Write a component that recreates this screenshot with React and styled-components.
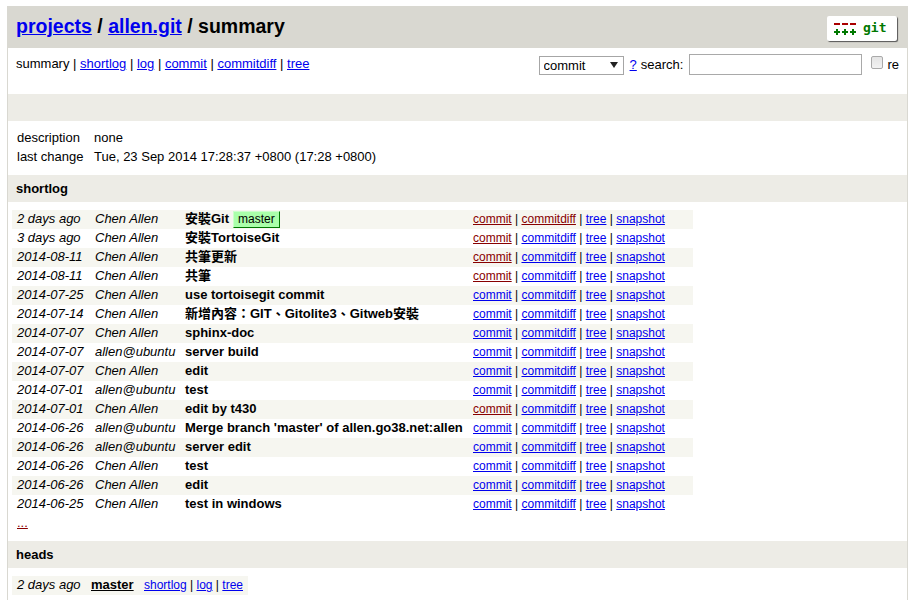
import React from "react";
import styled, { createGlobalStyle } from "styled-components";

const GlobalStyle = createGlobalStyle`
  html, body {
    margin: 0;
    padding: 0;
    height: 600px;
    overflow: hidden;
    background: #fff;
  }
  body {
    font-family: "Liberation Sans", "Noto Sans CJK TC", sans-serif;
    font-size: 13px;
    color: #000;
  }
`;

const Page = styled.div`
  margin: 6px 7px 0 7px;
  min-height: 594px;
  border: solid #d9d8d1;
  border-width: 0 1px;
`;

const Link = styled.a`
  color: ${(p) => (p.$visited ? "#880000" : "#0000ee")};
  text-decoration: underline;
`;

const PageHeader = styled.div`
  height: 42px;
  background: #d9d8d1;
  display: flex;
  align-items: center;
  justify-content: space-between;
  padding: 0 10px 0 8px;
  font-size: 19.5px;
  font-weight: bold;
`;

const Crumbs = styled.div`
  white-space: pre;
  margin-top: -2px;
`;

const Logo = styled.div`
  width: 70px;
  height: 25px;
  margin-top: 3px;
  background: #fff;
  border-radius: 2px;
  box-shadow: 1px 1px 1px #555;
  display: flex;
  align-items: center;
  gap: 6px;
  padding-left: 6px;
  box-sizing: border-box;
`;

const LogoText = styled.span`
  font-family: "DejaVu Sans Mono", monospace;
  font-size: 13px;
  font-weight: bold;
  color: #007800;
  line-height: 1;
  margin-top: -3px;
`;

const NavRow = styled.div`
  height: 46px;
  display: flex;
  justify-content: space-between;
  padding: 0 8px;
`;

const NavLinks = styled.div`
  padding-top: 8px;
  line-height: 16px;
`;

const SearchForm = styled.form`
  display: flex;
  align-items: flex-start;
  padding-top: 6px;
  line-height: 21px;
`;

const SelectWrap = styled.div`
  position: relative;
  width: 85px;
  height: 19px;
  margin: 1px 6px 0 0;
`;

const SearchType = styled.select`
  appearance: none;
  width: 100%;
  height: 100%;
  margin: 0;
  padding: 0 0 0 4px;
  border: 1px solid #a6a6a6;
  border-radius: 0;
  background: #fff;
  color: #000;
  font: 13px "Liberation Sans", sans-serif;
`;

const SelectArrow = styled.span`
  position: absolute;
  right: 6px;
  top: 7px;
  width: 0;
  height: 0;
  border-left: 4px solid transparent;
  border-right: 4px solid transparent;
  border-top: 6px solid #222;
  pointer-events: none;
`;

const SearchLabel = styled.span`
  margin-left: 4px;
  margin-right: 6px;
`;

const SearchInput = styled.input`
  width: 173px;
  height: 21px;
  padding: 0;
  margin: 0 9px 0 0;
  border: 1px solid #a9a9a9;
  box-sizing: border-box;
`;

const ReCheck = styled.input`
  appearance: none;
  width: 12px;
  height: 13px;
  margin: 2px 4px 0 0;
  border: 1px solid #a9a9a9;
  border-radius: 2px;
  background: linear-gradient(#e4e4e4, #f2f2f2);
`;

const EmptyBar = styled.div`
  height: 27px;
  background: #edece6;
`;

const Info = styled.table`
  border-collapse: collapse;
  margin: 8px 0 8px 5px;
  td {
    padding: 0 4px 0 4px;
    height: 19px;
    line-height: 18px;
    vertical-align: top;
  }
  td:first-child {
    width: 69px;
  }
`;

const SectionTitle = styled.div`
  height: 27px;
  line-height: 27px;
  background: #edece6;
  padding-left: 8px;
  font-weight: bold;
`;

const LogTable = styled.table`
  border-collapse: collapse;
  table-layout: fixed;
  margin: 8px 0 0 4px;
  width: ${(p) => p.$width}px;
`;

const LogRow = styled.tr`
  height: 19px;
  background: ${(p) => (p.$dark ? "#f6f6f0" : "#fff")};
`;

const Cell = styled.td`
  padding: 0 5px;
  height: 19px;
  line-height: 18px;
  vertical-align: top;
  white-space: nowrap;
`;

const AgeCell = styled(Cell)`
  font-style: italic;
  width: ${(p) => p.$width}px;
`;

const AuthorCell = styled(Cell)`
  font-style: italic;
  width: 80px;
`;

const SubjectCell = styled(Cell)`
  font-weight: bold;
  width: 278px;
`;

const LinkCell = styled(Cell)`
  font-size: 12px;
`;

const RefBadge = styled.span`
  font-weight: normal;
  display: inline-block;
  height: 15px;
  line-height: 14px;
  padding: 0 4px;
  margin-left: 4px;
  background: #aaffaa;
  border: 1px solid;
  border-color: #ccffcc #007700 #007700 #ccffcc;
  font-size: 12px;
`;

const MoreLink = styled.div`
  height: 27px;
  padding: 0 0 0 9px;
  line-height: 18px;
`;

const HeadCell = styled(Cell)`
  font-weight: bold;
  text-decoration: underline;
  width: 43px;
`;

const commits = [
  ["2 days ago", "Chen Allen", "安裝Git", true, true],
  ["3 days ago", "Chen Allen", "安裝TortoiseGit", true, false],
  ["2014-08-11", "Chen Allen", "共筆更新", true, false],
  ["2014-08-11", "Chen Allen", "共筆", true, false],
  ["2014-07-25", "Chen Allen", "use tortoisegit commit", false, false],
  ["2014-07-14", "Chen Allen", "新增內容：GIT、Gitolite3、Gitweb安裝", false, false],
  ["2014-07-07", "Chen Allen", "sphinx-doc", false, false],
  ["2014-07-07", "allen@ubuntu", "server build", false, false],
  ["2014-07-07", "Chen Allen", "edit", false, false],
  ["2014-07-01", "allen@ubuntu", "test", false, false],
  ["2014-07-01", "Chen Allen", "edit by t430", true, false],
  ["2014-06-26", "allen@ubuntu", "Merge branch 'master' of allen.go38.net:allen", false, false],
  ["2014-06-26", "allen@ubuntu", "server edit", false, false],
  ["2014-06-26", "Chen Allen", "test", false, false],
  ["2014-06-26", "Chen Allen", "edit", false, false],
  ["2014-06-25", "Chen Allen", "test in windows", false, false],
];

export default function App() {
  return (
    <Page>
      <GlobalStyle />
      <PageHeader>
        <Crumbs>
          <Link href="#">projects</Link> / <Link href="#">allen.git</Link> / summary
        </Crumbs>
        <Logo>
          <svg width="24" height="14" viewBox="0 0 24 14">
            <g fill="#aa0000">
              <rect x="1" y="1" width="6" height="2" />
              <rect x="9" y="1" width="6" height="2" />
              <rect x="17" y="1" width="6" height="2" />
            </g>
            <g fill="#007800">
              <path d="M3 7h2v2h2v2H5v2H3v-2H1V9h2z" />
              <path d="M11 7h2v2h2v2h-2v2h-2v-2H9V9h2z" />
              <path d="M19 7h2v2h2v2h-2v2h-2v-2h-2V9h2z" />
            </g>
          </svg>
          <LogoText>git</LogoText>
        </Logo>
      </PageHeader>
      <NavRow>
        <NavLinks>
          summary | <Link href="#">shortlog</Link> | <Link href="#">log</Link> | <Link href="#">commit</Link> |{" "}
          <Link href="#">commitdiff</Link> | <Link href="#">tree</Link>
        </NavLinks>
        <SearchForm>
          <SelectWrap>
            <SearchType defaultValue="commit">
              <option>commit</option>
            </SearchType>
            <SelectArrow />
          </SelectWrap>
          <Link href="#">?</Link>
          <SearchLabel>search:</SearchLabel>
          <SearchInput type="text" />
          <ReCheck type="checkbox" />
          <span>re</span>
        </SearchForm>
      </NavRow>
      <EmptyBar />
      <Info>
        <tbody>
          <tr>
            <td>description</td>
            <td>none</td>
          </tr>
          <tr>
            <td>last change</td>
            <td>Tue, 23 Sep 2014 17:28:37 +0800 (17:28 +0800)</td>
          </tr>
        </tbody>
      </Info>
      <SectionTitle>shortlog</SectionTitle>
      <LogTable $width={681}>
        <tbody>
          {commits.map(([age, author, subject, commitSeen, diffSeen], i) => (
            <LogRow key={i} $dark={i % 2 === 0}>
              <AgeCell $width={68}>{age}</AgeCell>
              <AuthorCell>{author}</AuthorCell>
              <SubjectCell>
                {subject}
                {i === 0 && <RefBadge>master</RefBadge>}
              </SubjectCell>
              <LinkCell>
                <Link href="#" $visited={commitSeen}>commit</Link> |{" "}
                <Link href="#" $visited={diffSeen}>commitdiff</Link> | <Link href="#">tree</Link> |{" "}
                <Link href="#">snapshot</Link>
              </LinkCell>
            </LogRow>
          ))}
        </tbody>
      </LogTable>
      <MoreLink>
        <Link href="#" $visited>...</Link>
      </MoreLink>
      <SectionTitle>heads</SectionTitle>
      <LogTable $width={236}>
        <tbody>
          <LogRow $dark>
            <AgeCell $width={64}>2 days ago</AgeCell>
            <HeadCell>master</HeadCell>
            <LinkCell>
              <Link href="#">shortlog</Link> | <Link href="#">log</Link> | <Link href="#">tree</Link>
            </LinkCell>
          </LogRow>
        </tbody>
      </LogTable>
    </Page>
  );
}
